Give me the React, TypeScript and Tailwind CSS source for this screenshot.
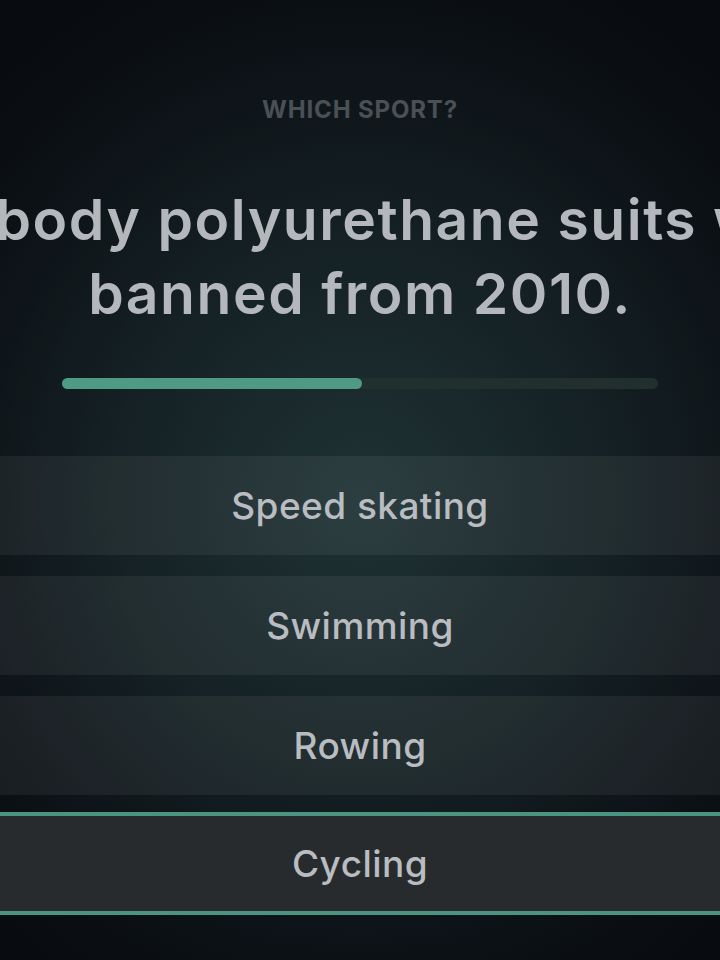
const OPTIONS = ["Speed skating", "Swimming", "Rowing", "Cycling"];
const SELECTED = "Cycling";

export default function App() {
  return (
    <div
      className="flex min-h-[960px] w-full flex-col items-center overflow-hidden bg-[radial-gradient(ellipse_75%_60%_at_50%_52%,#1f3234_0%,#152124_45%,#0c1116_80%,#080b0f_100%)]"
      style={{ fontFamily: 'Inter, "Noto Sans", sans-serif' }}
    >
      <p className="mt-[96px] text-[24px] font-bold leading-[28px] tracking-[0.035em] text-[#4a5056]">WHICH SPORT?</p>

      <div className="mt-[59px] flex w-full flex-col text-[57px] font-semibold leading-[74px] tracking-[0.027em] text-[#b4b7bc]">
        <div className="flex w-full justify-center">
          <span className="whitespace-nowrap">Full-body polyurethane suits were</span>
        </div>
        <div className="flex w-full justify-center">
          <span className="whitespace-nowrap">banned from 2010.</span>
        </div>
      </div>

      <div className="mt-[47px] h-[11px] w-[596px] rounded-full bg-[#21302f]">
        <div className="h-full w-[50.4%] rounded-full bg-[#4f9a85]" />
      </div>

      <div className="mt-[67px] flex w-full flex-col gap-[21px]">
        {OPTIONS.map((opt) =>
          opt === SELECTED ? (
            <div
              key={opt}
              className="-mt-[4px] flex h-[103px] w-full items-center justify-center border-y-[4px] border-[#4a9580] bg-[#272b2e] text-[37px] font-medium tracking-[0.012em] text-[#b9bcc0]"
            >
              {opt}
            </div>
          ) : (
            <div
              key={opt}
              className="flex h-[99px] w-full items-center justify-center bg-white/[0.06] text-[37px] font-medium tracking-[0.012em] text-[#b9bcc0]"
            >
              {opt}
            </div>
          )
        )}
      </div>
    </div>
  );
}
